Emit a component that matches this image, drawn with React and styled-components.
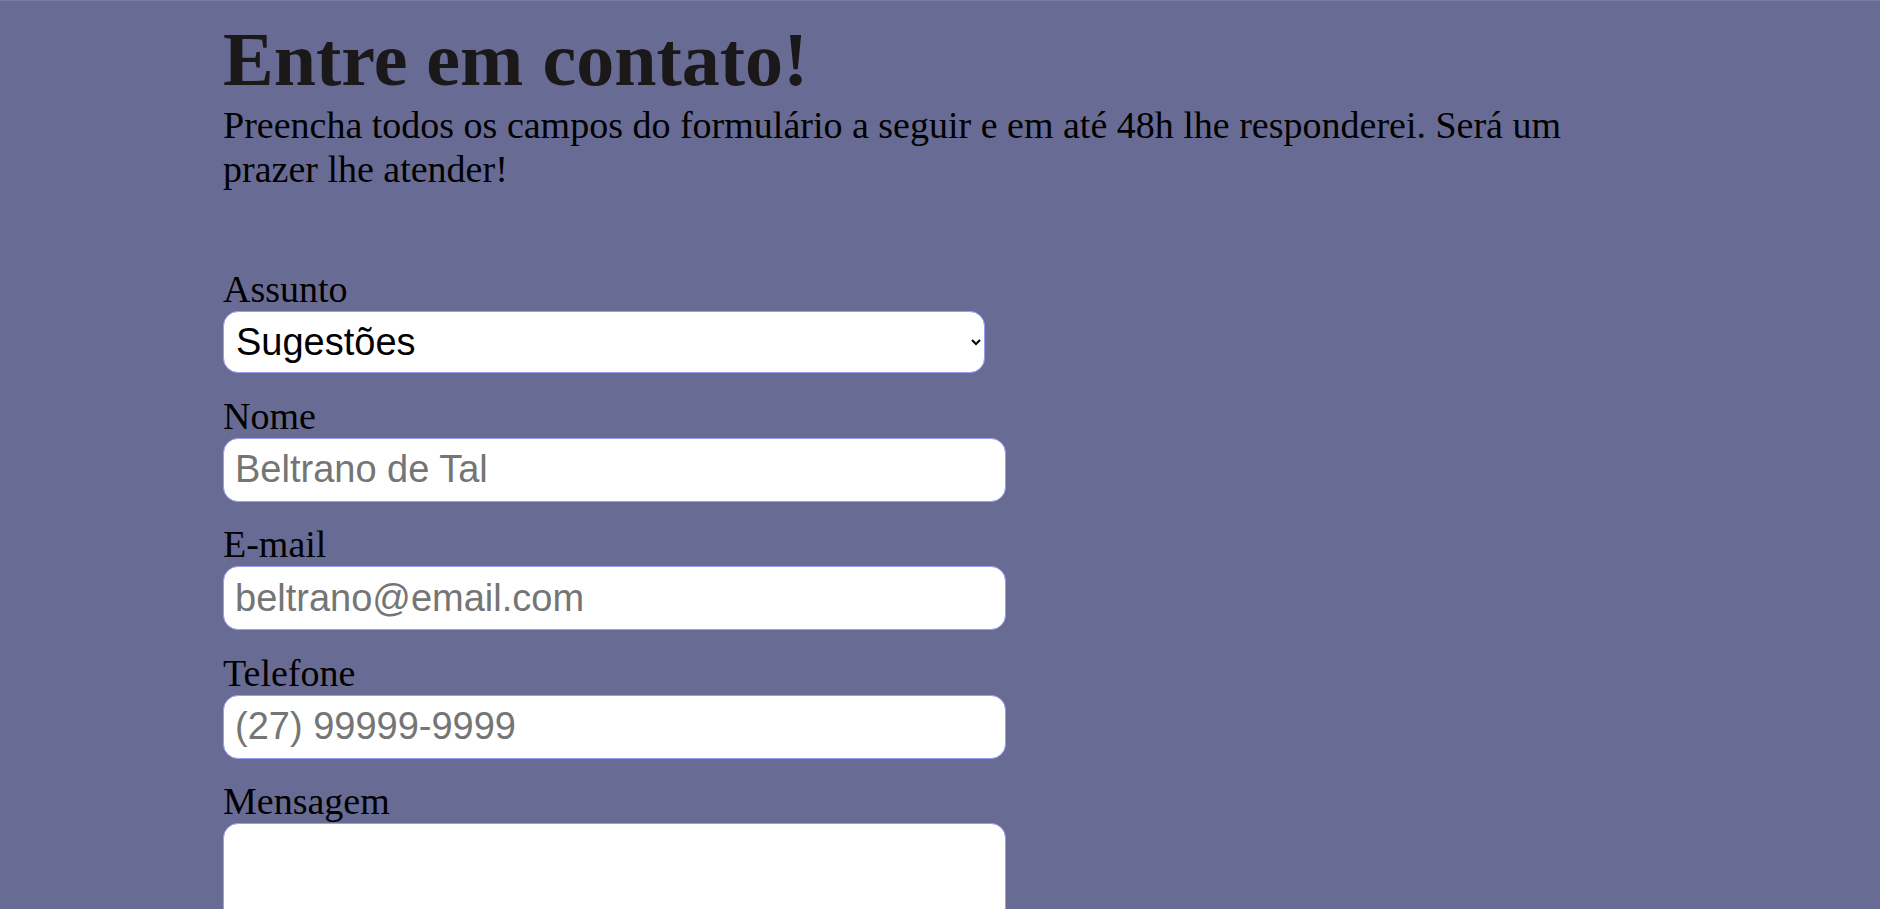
import React, { useState } from 'react';
import styled, { createGlobalStyle } from 'styled-components';

// Base page styles
const GlobalStyle = createGlobalStyle`
  html, body {
    margin: 0;
    padding: 0;
    background-color: #686c94;
  }

  body {
    font-family: "Liberation Serif", "Times New Roman", serif;
    color: #000;
  }
`;

const Page = styled.main`
  min-height: 909px;
  box-sizing: border-box;
  border-top: 1px solid #7a7e9f;
  padding-top: 15px;
  background-color: #686c94;
`;

const Container = styled.section`
  width: 1400px;
  margin: 0 0 0 223px;
`;

const Title = styled.h1`
  margin: 0;
  font-size: 76px;
  font-weight: bold;
  line-height: normal;
  color: #1b1819;
`;

const Intro = styled.p`
  margin: 0 0 76px;
  font-size: 38px;
  line-height: normal;
`;

const ContactForm = styled.form`
  display: flex;
  flex-direction: column;
  gap: 20.5px;
`;

const Field = styled.div`
  display: flex;
  flex-direction: column;
  align-items: flex-start;
`;

const FieldLabel = styled.label`
  font-size: 38px;
  line-height: normal;
  color: #000;
`;

const fieldBase = `
  box-sizing: border-box;
  border: 1px solid #9c9cf4;
  border-radius: 15px;
  background-color: #fff;
  font-family: "Liberation Sans", Arial, sans-serif;
  font-size: 38px;
  color: #000;
  outline: none;

  &::placeholder {
    color: #757575;
  }
`;

const Select = styled.select`
  ${fieldBase}
  width: 762px;
  height: 62px;
  padding: 0 6px 0 8px;
`;

const TextInput = styled.input`
  ${fieldBase}
  width: 783px;
  height: 64px;
  padding: 0 11px;
`;

const MessageBox = styled.textarea`
  ${fieldBase}
  width: 783px;
  height: 200px;
  padding: 10px 11px;
  resize: vertical;
`;

const App = () => {
  const [subject, setSubject] = useState('Sugestões');

  return (
    <>
      <GlobalStyle />
      <Page>
        <Container>
          <Title>Entre em contato!</Title>
          <Intro>
            Preencha todos os campos do formulário a seguir e em até 48h lhe
            responderei. Será um prazer lhe atender!
          </Intro>
          <ContactForm onSubmit={(e) => e.preventDefault()}>
            <Field>
              <FieldLabel htmlFor="assunto">Assunto</FieldLabel>
              <Select
                id="assunto"
                value={subject}
                onChange={(e) => setSubject(e.target.value)}
              >
                <option value="Sugestões">Sugestões</option>
                <option value="Dúvidas">Dúvidas</option>
                <option value="Elogios">Elogios</option>
                <option value="Reclamações">Reclamações</option>
              </Select>
            </Field>
            <Field>
              <FieldLabel htmlFor="nome">Nome</FieldLabel>
              <TextInput id="nome" type="text" placeholder="Beltrano de Tal" />
            </Field>
            <Field>
              <FieldLabel htmlFor="email">E-mail</FieldLabel>
              <TextInput id="email" type="email" placeholder="beltrano@email.com" />
            </Field>
            <Field>
              <FieldLabel htmlFor="telefone">Telefone</FieldLabel>
              <TextInput id="telefone" type="tel" placeholder="(27) 99999-9999" />
            </Field>
            <Field>
              <FieldLabel htmlFor="mensagem">Mensagem</FieldLabel>
              <MessageBox id="mensagem" />
            </Field>
          </ContactForm>
        </Container>
      </Page>
    </>
  );
};

export default App;
